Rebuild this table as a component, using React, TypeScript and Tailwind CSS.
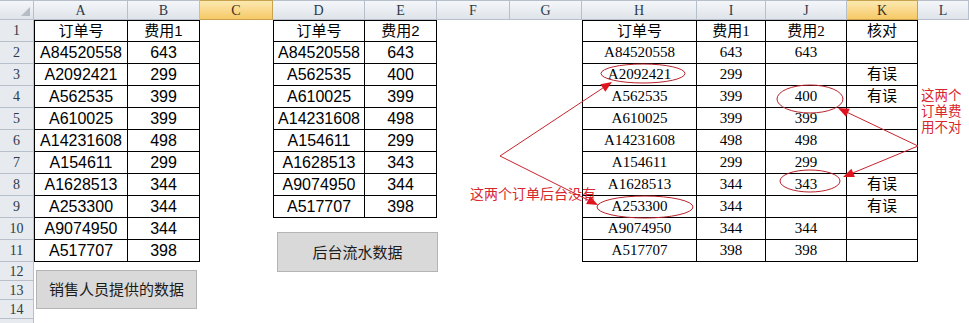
import clsx from "clsx";

const letters = ["", "A", "B", "C", "D", "E", "F", "G", "H", "I", "J", "K", "L"];
const selectedCols = [3, 11];

const salesData = [
  ["订单号", "费用1"],
  ["A84520558", "643"],
  ["A2092421", "299"],
  ["A562535", "399"],
  ["A610025", "399"],
  ["A14231608", "498"],
  ["A154611", "299"],
  ["A1628513", "344"],
  ["A253300", "344"],
  ["A9074950", "344"],
  ["A517707", "398"],
];

const backendData = [
  ["订单号", "费用2"],
  ["A84520558", "643"],
  ["A562535", "400"],
  ["A610025", "399"],
  ["A14231608", "498"],
  ["A154611", "299"],
  ["A1628513", "343"],
  ["A9074950", "344"],
  ["A517707", "398"],
];

const checkData = [
  ["订单号", "费用1", "费用2", "核对"],
  ["A84520558", "643", "643", ""],
  ["A2092421", "299", "", "有误"],
  ["A562535", "399", "400", "有误"],
  ["A610025", "399", "399", ""],
  ["A14231608", "498", "498", ""],
  ["A154611", "299", "299", ""],
  ["A1628513", "344", "343", "有误"],
  ["A253300", "344", "", "有误"],
  ["A9074950", "344", "344", ""],
  ["A517707", "398", "398", ""],
];

type Cell = { text: string; table: number; firstCol: boolean; firstRow: boolean };

function getCell(r: number, c: number): Cell {
  const row = r - 1;
  if (c >= 1 && c <= 2 && row < salesData.length)
    return { text: salesData[row][c - 1], table: 1, firstCol: c === 1, firstRow: row === 0 };
  if (c >= 4 && c <= 5 && row < backendData.length)
    return { text: backendData[row][c - 4], table: 2, firstCol: c === 4, firstRow: row === 0 };
  if (c >= 8 && c <= 11 && row < checkData.length)
    return { text: checkData[row][c - 8], table: 3, firstCol: c === 8, firstRow: row === 0 };
  return { text: "", table: 0, firstCol: false, firstRow: false };
}

const isCjk = (s: string) => /[\u4e00-\u9fff]/.test(s);

function Arrow({ x1, y1, x2, y2 }: { x1: number; y1: number; x2: number; y2: number }) {
  const len = Math.hypot(x2 - x1, y2 - y1);
  const dx = (x2 - x1) / len;
  const dy = (y2 - y1) / len;
  const bx = x2 - dx * 11;
  const by = y2 - dy * 11;
  const pts = `${x2},${y2} ${bx - dy * 4.5},${by + dx * 4.5} ${bx + dy * 4.5},${by - dx * 4.5}`;
  return (
    <g>
      <line x1={x1} y1={y1} x2={bx} y2={by} stroke="#c8232c" strokeWidth={1} />
      <polygon points={pts} fill="#e0141e" />
    </g>
  );
}

export default function App() {
  const rows = Array.from({ length: 16 }, (_, i) => i);
  const cols = Array.from({ length: 13 }, (_, i) => i);

  return (
    <div className="relative w-[969px] h-[323px] overflow-hidden bg-white">
      <div className="grid grid-cols-[34px_94px_72px_73px_92px_72px_73px_72px_115px_69px_81px_71px_1fr] grid-rows-[20px_repeat(11,22px)_repeat(4,19px)]">
        {rows.map((r) =>
          cols.map((c) => {
            if (r === 0) {
              if (c === 0)
                return (
                  <div key={`${r}-${c}`} className="relative border-r border-b border-t border-[#b7bfca] bg-gradient-to-b from-[#f4f6f9] to-[#dfe4ea]">
                    <div className="absolute right-[3px] bottom-[3px] w-0 h-0 border-l-[9px] border-l-transparent border-b-[9px] border-b-[#b5bcc6]" />
                  </div>
                );
              const sel = selectedCols.includes(c);
              return (
                <div
                  key={`${r}-${c}`}
                  className={clsx(
                    "flex items-center justify-center border-r border-b border-t text-[14px] font-['Liberation_Serif',serif]",
                    sel
                      ? "bg-gradient-to-b from-[#fce9b0] to-[#f6c965] border-[#c9a24e] text-[#3a3020]"
                      : "bg-gradient-to-b from-[#f4f6f9] to-[#dfe4ea] border-[#b7bfca] text-[#2e3a48]"
                  )}
                >
                  {letters[c]}
                </div>
              );
            }
            if (c === 0)
              return (
                <div
                  key={`${r}-${c}`}
                  className="flex items-center justify-center border-r border-b border-[#b7bfca] bg-[#e7eaef] text-[14px] text-[#2e3a48] font-['Liberation_Serif',serif]"
                >
                  {r < 15 ? r : ""}
                </div>
              );
            const cell = getCell(r, c);
            return (
              <div
                key={`${r}-${c}`}
                className={clsx(
                  "flex items-center justify-center whitespace-nowrap text-black",
                  cell.table > 0 && "border-r border-b border-black",
                  cell.firstCol && "border-l",
                  cell.firstRow && "border-t",
                  cell.table === 3
                    ? "font-['Liberation_Serif','Noto_Sans_CJK_SC',serif] text-[15px]"
                    : "font-['Liberation_Sans','Noto_Sans_CJK_SC',sans-serif]",
                  cell.table !== 3 && (isCjk(cell.text) ? "text-[15px]" : "text-[16px]")
                )}
              >
                {cell.text}
              </div>
            );
          })
        )}
      </div>

      {/* shapes on the sheet */}
      <div className="absolute left-[36px] top-[270px] w-[161px] h-[39px] flex items-center justify-center bg-[#d9d9d9] border border-[#b4b4b4] text-[15px] text-[#1c1c1c] font-['Noto_Sans_CJK_SC',sans-serif]">
        销售人员提供的数据
      </div>
      <div className="absolute left-[277px] top-[232px] w-[161px] h-[40px] flex items-center justify-center bg-[#d9d9d9] border border-[#b4b4b4] text-[15px] text-[#1c1c1c] font-['Noto_Sans_CJK_SC',sans-serif]">
        后台流水数据
      </div>

      <svg className="absolute inset-0 pointer-events-none" width={969} height={323}>
        <ellipse cx={643} cy={73.5} rx={42} ry={9.5} fill="none" stroke="#b8232b" strokeWidth={1} />
        <ellipse cx={810} cy={99} rx={33} ry={14} fill="none" stroke="#b8232b" strokeWidth={1} />
        <ellipse cx={810} cy={181} rx={30} ry={11} fill="none" stroke="#b8232b" strokeWidth={1} />
        <ellipse cx={645} cy={207} rx={48} ry={11} fill="none" stroke="#b8232b" strokeWidth={1} />
        <Arrow x1={500} y1={156} x2={612} y2={82} />
        <Arrow x1={500} y1={156} x2={598} y2={205} />
        <Arrow x1={918} y1={146} x2={838} y2={108} />
        <Arrow x1={918} y1={146} x2={843} y2={177} />
      </svg>

      <div className="absolute left-[470px] top-[185px] text-[14px] leading-[16px] text-[#d9262c] font-['Noto_Sans_CJK_SC',sans-serif] whitespace-nowrap">
        这两个订单后台没有
      </div>
      <div className="absolute left-[921px] top-[86px] flex flex-col text-[13.5px] leading-[16px] text-[#d9262c] font-['Noto_Sans_CJK_SC',sans-serif]">
        <span>这两个</span>
        <span>订单费</span>
        <span>用不对</span>
      </div>
    </div>
  );
}
